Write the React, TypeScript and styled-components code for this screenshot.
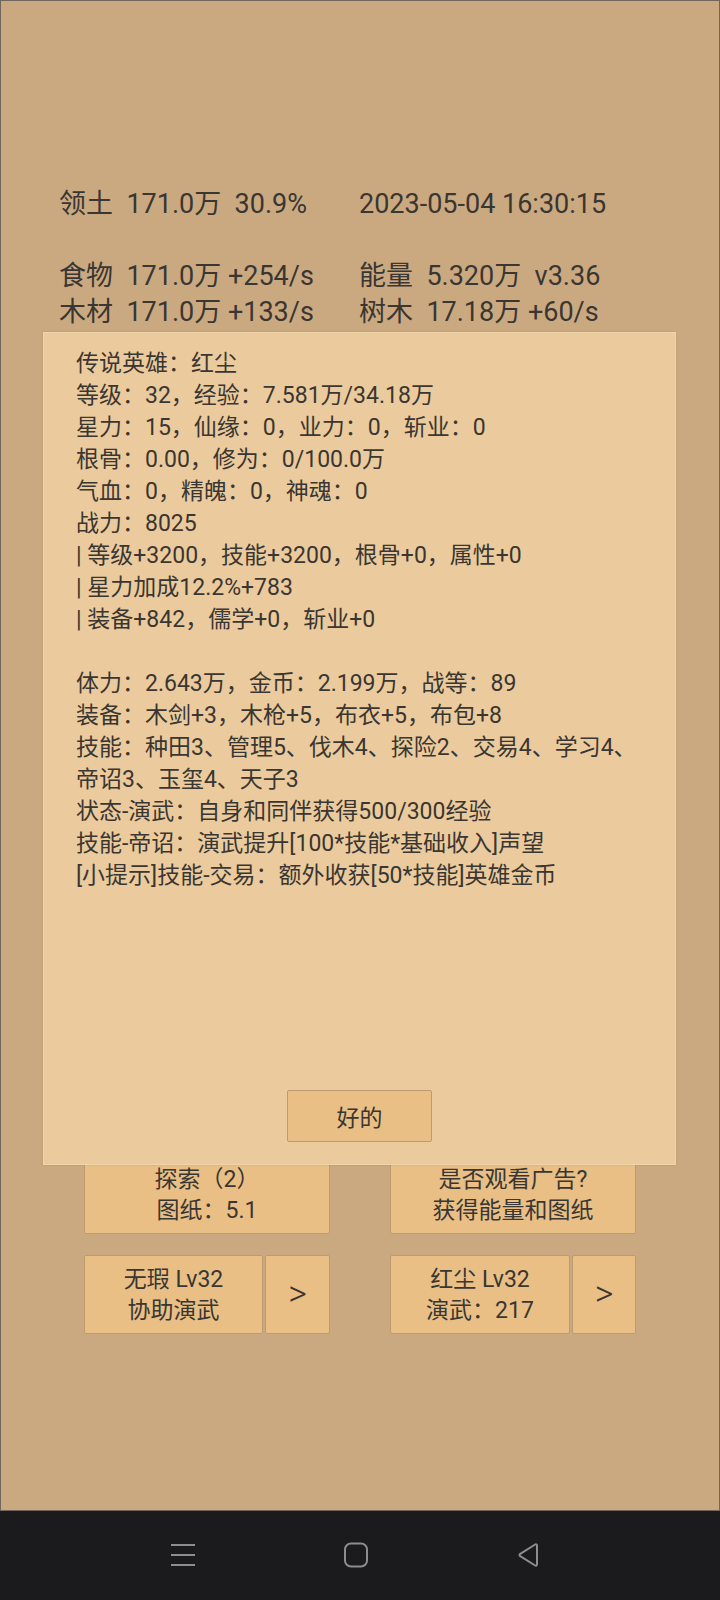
import React from 'react'
import styled, { createGlobalStyle } from 'styled-components'

const GlobalStyle = createGlobalStyle`
  html, body {
    margin: 0;
    padding: 0;
    background: #1b1b1d;
  }
  * {
    box-sizing: border-box;
  }
`

const FONT = `Roboto, "Noto Sans CJK SC", sans-serif`

const Screen = styled.div`
  width: 720px;
  height: 1600px;
  display: flex;
  flex-direction: column;
  font-family: ${FONT};
  color: #3a3632;
`

const GameArea = styled.div`
  position: relative;
  height: 1511px;
  background: #caa981;
  border: 1px solid #6f665d;
  padding-top: 185px;
`

const Header = styled.div`
  display: grid;
  grid-template-columns: 300px 1fr;
  padding-left: 58px;
  font-size: 27px;
  line-height: 36px;
  white-space: pre;
`

const Blank = styled.div`
  grid-column: span 2;
  height: 36px;
`

const Actions = styled.div`
  display: grid;
  grid-template-columns: 246px 246px;
  column-gap: 60px;
  row-gap: 21px;
  padding-left: 83px;
  margin-top: 825px;
`

const Pair = styled.div`
  display: flex;
  gap: 2px;
`

const Btn = styled.div<{ $w?: number; $big?: boolean }>`
  ${({ $w }) => ($w ? `width: ${$w}px; flex: none;` : 'flex: 1;')}
  height: 79px;
  background: #e9bf86;
  border: 1px solid #bc9b70;
  border-radius: 2px;
  display: flex;
  flex-direction: column;
  align-items: center;
  justify-content: center;
  font-size: ${({ $big }) => ($big ? '36px' : '23px')};
  font-weight: ${({ $big }) => ($big ? 300 : 400)};
  line-height: 31px;
  text-align: center;
  white-space: pre;
`

const Modal = styled.div`
  position: absolute;
  left: 42px;
  top: 331px;
  width: 633px;
  height: 833px;
  background: #ebcb9d;
  border: 1px solid #f0d5ab;
  box-shadow: 0 0 2px rgba(120, 90, 50, 0.25);
  display: flex;
  flex-direction: column;
  padding: 15px 0 22px 32px;
`

const Info = styled.div`
  font-size: 23px;
  line-height: 32px;
  white-space: pre;
`

const Line = styled.div`
  height: 32px;
`

const Footer = styled.div`
  margin-top: auto;
  display: flex;
  justify-content: center;
  padding-right: 32px;
`

const OkButton = styled.div`
  width: 145px;
  height: 52px;
  background: #e9bf86;
  border: 1px solid #bc9b70;
  border-radius: 2px;
  display: flex;
  align-items: center;
  justify-content: center;
  font-size: 23px;
`

const NavBar = styled.div`
  flex: 1;
  display: flex;
  align-items: center;
  justify-content: center;
  gap: 147px;
  padding-right: 8px;
  padding-bottom: 1px;
  background: #1b1b1d;
  color: #8d8d8d;
`

const info = [
  '传说英雄：红尘',
  '等级：32，经验：7.581万/34.18万',
  '星力：15，仙缘：0，业力：0，斩业：0',
  '根骨：0.00，修为：0/100.0万',
  '气血：0，精魄：0，神魂：0',
  '战力：8025',
  '| 等级+3200，技能+3200，根骨+0，属性+0',
  '| 星力加成12.2%+783',
  '| 装备+842，儒学+0，斩业+0',
  '',
  '体力：2.643万，金币：2.199万，战等：89',
  '装备：木剑+3，木枪+5，布衣+5，布包+8',
  '技能：种田3、管理5、伐木4、探险2、交易4、学习4、',
  '帝诏3、玉玺4、天子3',
  '状态-演武：自身和同伴获得500/300经验',
  '技能-帝诏：演武提升[100*技能*基础收入]声望',
  '[小提示]技能-交易：额外收获[50*技能]英雄金币',
]

const MenuIcon = () => (
  <svg width="26" height="24" viewBox="0 0 26 24" fill="none" stroke="currentColor" strokeWidth="2">
    <path d="M1 2h24M1 12h24M1 22h24" />
  </svg>
)

const HomeIcon = () => (
  <svg width="26" height="26" viewBox="0 0 26 26" fill="none" stroke="currentColor" strokeWidth="2">
    <rect x="2" y="1.5" width="22" height="23" rx="6" />
  </svg>
)

const BackIcon = () => (
  <svg width="26" height="26" viewBox="0 0 26 26" fill="none" stroke="currentColor" strokeWidth="2" strokeLinejoin="round">
    <path d="M21 3.5v19a1.2 1.2 0 0 1-1.8 1L4.2 14.2a1.4 1.4 0 0 1 0-2.4L19.2 2.5a1.2 1.2 0 0 1 1.8 1z" />
  </svg>
)

export default function App() {
  return (
    <Screen>
      <GlobalStyle />
      <GameArea>
        <Header>
          <div>{'领土  171.0万  30.9%'}</div>
          <div>{'2023-05-04 16:30:15'}</div>
          <Blank />
          <div>{'食物  171.0万 +254/s'}</div>
          <div>{'能量  5.320万  v3.36'}</div>
          <div>{'木材  171.0万 +133/s'}</div>
          <div>{'树木  17.18万 +60/s'}</div>
        </Header>

        <Actions>
          <Btn>{'探索（2）\n图纸：5.1'}</Btn>
          <Btn>{'是否观看广告?\n获得能量和图纸'}</Btn>
          <Pair>
            <Btn>{'无瑕 Lv32\n协助演武'}</Btn>
            <Btn $w={65} $big>{'>'}</Btn>
          </Pair>
          <Pair>
            <Btn>{'红尘 Lv32\n演武：217'}</Btn>
            <Btn $w={64} $big>{'>'}</Btn>
          </Pair>
        </Actions>

        <Modal>
          <Info>
            {info.map((t, i) => (
              <Line key={i}>{t}</Line>
            ))}
          </Info>
          <Footer>
            <OkButton>好的</OkButton>
          </Footer>
        </Modal>
      </GameArea>
      <NavBar>
        <MenuIcon />
        <HomeIcon />
        <BackIcon />
      </NavBar>
    </Screen>
  )
}
